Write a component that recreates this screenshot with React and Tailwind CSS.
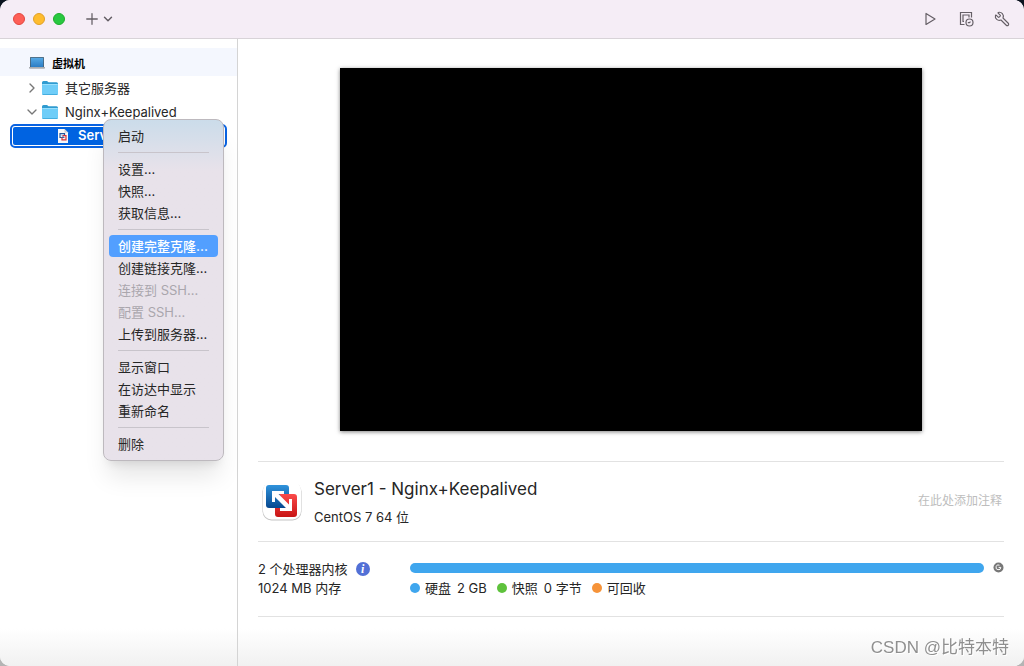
import React, { useState } from 'react';
import clsx from 'clsx';
import { ChevronDown, ChevronRight, Plus, Wrench } from 'lucide-react';

const menuGroups = [
  [{ label: '启动' }],
  [{ label: '设置...' }, { label: '快照...' }, { label: '获取信息...' }],
  [
    { label: '创建完整克隆...' },
    { label: '创建链接克隆...' },
    { label: '连接到 SSH...', disabled: true },
    { label: '配置 SSH...', disabled: true },
    { label: '上传到服务器...' },
  ],
  [{ label: '显示窗口' }, { label: '在访达中显示' }, { label: '重新命名' }],
  [{ label: '删除' }],
];

const legend = [
  { color: 'bg-[#3fa6ee]', name: '硬盘', value: '2 GB' },
  { color: 'bg-[#5ec23c]', name: '快照', value: '0 字节' },
  { color: 'bg-[#f69339]', name: '可回收' },
];

function FolderIcon() {
  return (
    <svg width="16" height="16" viewBox="0 0 16 16" className="shrink-0">
      <path d="M0 2.5Q0 1 1.5 1H5l1.5 1.3H14.5Q16 2.3 16 3.8V6H0z" fill="#2f9bd0" />
      <rect x="0" y="4" width="16" height="11" rx="1.2" fill="#6fcdf8" />
      <rect x="0.3" y="4" width="15.4" height="1" fill="#9be0fd" />
      <rect x="0.5" y="14" width="15" height="1" rx="0.5" fill="#45aee0" />
    </svg>
  );
}

function LaptopIcon() {
  return (
    <svg width="16" height="14" viewBox="0 0 16 14" className="shrink-0">
      <defs>
        <linearGradient id="laptop" x1="0" y1="0" x2="0" y2="1">
          <stop offset="0" stopColor="#56aae6" />
          <stop offset="1" stopColor="#2c7dc4" />
        </linearGradient>
      </defs>
      <rect x="1" y="0" width="14" height="10.5" rx="0.8" fill="#4a5a66" />
      <rect x="1.7" y="0.7" width="12.6" height="9.3" fill="url(#laptop)" />
      <path d="M0 10h16v1q0 .8-1 .8H1q-1 0-1-.8z" fill="#a9adb1" />
    </svg>
  );
}

function VmFileIcon() {
  return (
    <svg width="12" height="16" viewBox="0 0 12 16" className="shrink-0">
      <path d="M1 1h6.500L11 4.500V15H1z" fill="#f7f7f7" />
      <path d="M7.500 1v3.500H11z" fill="#c9ccd2" />
      <path d="M6.800 9.500H3V5.700h4.500v2" fill="none" stroke="#24579f" strokeWidth="1.200" />
      <path d="M5.500 7.700H9v4.100H5V9.500" fill="none" stroke="#d8313a" strokeWidth="1.200" />
      <path d="M5 7.500l2.500 2.500" stroke="#24579f" strokeWidth="0.800" />
    </svg>
  );
}

function FusionLogo() {
  return (
    <svg width="40" height="40" viewBox="0 0 40 40" className="shrink-0">
      <defs>
        <linearGradient id="blue" x1="0" y1="0" x2="0" y2="1">
          <stop offset="0" stopColor="#2f93dc" />
          <stop offset="1" stopColor="#07488f" />
        </linearGradient>
        <linearGradient id="red" x1="0" y1="0" x2="0" y2="1">
          <stop offset="0" stopColor="#fb4b4b" />
          <stop offset="1" stopColor="#c81414" />
        </linearGradient>
      </defs>
      <rect x="0.5" y="1.5" width="39" height="38" rx="9" fill="#c4c4c4" />
      <rect x="1" y="0.5" width="38" height="38" rx="8.5" fill="#fff" />
      <rect x="4" y="4" width="23" height="23" rx="3" fill="url(#blue)" />
      <path d="M17.5 13H32q3 0 3 3v17q0 3-3 3H16q-3 0-3-3v-6h11z" fill="url(#red)" />
      <path d="M10 10h12v3h-5.500L27 23.500V18h3v12H18v-3h6L13 16v5h-3z" fill="#fff" />
    </svg>
  );
}

function PlayIcon() {
  return (
    <svg width="16" height="16" viewBox="0 0 16 16" fill="none" stroke="currentColor" strokeWidth="1.2" strokeLinejoin="round">
      <path d="M4 2.5v11L13 8z" />
    </svg>
  );
}

function SnapshotIcon() {
  return (
    <svg width="16" height="16" viewBox="0 0 16 16" fill="none" stroke="currentColor" strokeWidth="1.2">
      <path d="M6.500 13.500H2.500V1.500h11v5" />
      <path d="M6 10.500H5V4h6v2.500" />
      <circle cx="11.500" cy="11.500" r="3.500" />
      <path d="M9.800 11.700h1.700l1-1" />
    </svg>
  );
}

function TitleBar() {
  return (
    <header className="flex h-[39px] shrink-0 items-center justify-between border-b border-[#d8d3d8] bg-[#f5edf6] pr-3.5 pl-[13px]">
      <div className="flex items-center gap-2">
        <button aria-label="关闭" className="size-3 rounded-full border border-[#e2463f] bg-[#fe5f57]" />
        <button aria-label="最小化" className="size-3 rounded-full border border-[#e0a028] bg-[#febc2e]" />
        <button aria-label="缩放" className="size-3 rounded-full border border-[#1dad2b] bg-[#28c840]" />
        <button aria-label="添加" className="ml-2.5 flex items-center text-[#655f66]">
          <Plus size={18} strokeWidth={1.7} />
          <ChevronDown size={14} strokeWidth={2.5} />
        </button>
      </div>
      <div className="flex items-center gap-5 text-[#655f66]">
        <button aria-label="启动">
          <PlayIcon />
        </button>
        <button aria-label="快照">
          <SnapshotIcon />
        </button>
        <button aria-label="设置">
          <Wrench size={16} strokeWidth={1.7} className="-scale-x-100" />
        </button>
      </div>
    </header>
  );
}

function ContextMenu() {
  const [active, setActive] = useState('创建完整克隆...');

  return (
    <div
      role="menu"
      className="absolute top-[-5px] left-[103px] z-10 w-[121px] rounded-lg border border-[#bdb9be] bg-linear-to-b from-[#cbdcea] to-[#e8e2ea] to-15% p-[5px] shadow-xl"
    >
      {menuGroups.map((group, i) => (
        <div key={i} role="group">
          {i > 0 && <hr className="mx-[9px] my-[5px] border-[#c8c4cb]" />}
          {group.map((item) => (
            <button
              key={item.label}
              role="menuitem"
              disabled={item.disabled}
              onMouseEnter={() => setActive(item.label)}
              className={clsx(
                'block h-[22px] w-full rounded px-[9px] pt-0.5 text-left whitespace-nowrap',
                item.disabled && 'text-[#aaa6ad]',
                active === item.label && 'bg-[#529fff] font-medium text-white'
              )}
            >
              {item.label}
            </button>
          ))}
        </div>
      ))}
    </div>
  );
}

function Sidebar() {
  return (
    <aside className="w-[238px] shrink-0 border-r border-[#d4d4d4] pt-[9px]">
      <h2 className="flex h-7 items-center gap-[7px] bg-[#f4f7fe] pt-1 pl-[29px] text-[11px] font-bold text-black">
        <LaptopIcon />
        虚拟机
      </h2>
      <ul>
        <li className="flex h-6 items-center gap-0.5 pl-6">
          <ChevronRight size={16} strokeWidth={2} className="text-[#777]" />
          <FolderIcon />
          <span className="pt-0.5 pl-[5px]">其它服务器</span>
        </li>
        <li className="flex h-6 items-center gap-0.5 pl-6">
          <ChevronDown size={16} strokeWidth={2} className="text-[#777]" />
          <FolderIcon />
          <span className="pt-0.5 pl-[5px]">Nginx+Keepalived</span>
        </li>
        <li className="relative px-2.5">
          <div className="h-6 rounded-[5px] border-2 border-[#0a63e1] bg-white p-px">
            <div className="flex h-full items-center gap-[9px] rounded-xs bg-[#0063e1] pl-11 font-semibold text-white">
              <VmFileIcon />
              Server1
            </div>
          </div>
          <ContextMenu />
        </li>
      </ul>
    </aside>
  );
}

function Details() {
  return (
    <main className="min-w-0 flex-1 px-5 pt-[29px]">
      <div className="mx-auto aspect-[582/363] w-[78%] bg-black shadow-[0_1px_4px_rgba(0,0,0,0.5)]" />

      <section className="mt-[30px] flex h-20 items-center justify-between border-t border-[#e2e2e2] pl-1">
        <div className="flex items-center gap-3">
          <FusionLogo />
          <div className="pt-0.5">
            <h1 className="text-[17px] leading-7">Server1 - Nginx+Keepalived</h1>
            <p className="mt-0.5 leading-6">CentOS 7 64 位</p>
          </div>
        </div>
        <input
          aria-label="注释"
          placeholder="在此处添加注释"
          className="w-40 pr-0.5 text-right text-xs outline-none placeholder:text-[#bdbdbd]"
        />
      </section>

      <section className="flex border-y border-[#e2e2e2] py-[18px]">
        <div className="w-38 shrink-0 leading-[19px]">
          <p className="flex items-center gap-2">
            2 个处理器内核
            <button
              aria-label="信息"
              className="size-3.5 rounded-full bg-[#5270d6] text-center font-['Liberation_Serif',serif] text-xs leading-3.5 font-bold text-white italic"
            >
              i
            </button>
          </p>
          <p>1024 MB 内存</p>
        </div>
        <div className="min-w-0 flex-1">
          <div className="flex h-4 items-center gap-[9px]">
            <div className="h-2.5 flex-1 rounded-full bg-[#3fa6ee]" />
            <button aria-label="刷新">
              <svg width="11" height="11" viewBox="0 0 11 11" className="block">
                <circle cx="5.500" cy="5.500" r="5" fill="#777" />
                <path d="M6.500 3.200A2.400 2.400 0 1 0 7.800 5.400H5.600" fill="none" stroke="#fff" />
              </svg>
            </button>
          </div>
          <ul className="mt-[3px] flex gap-2.5 leading-[19px]">
            {legend.map((item) => (
              <li key={item.name} className="flex items-center">
                <span className={clsx('mr-[5px] size-2.5 rounded-full', item.color)} />
                {item.name}
                {item.value && <span className="ml-1.5">{item.value}</span>}
              </li>
            ))}
          </ul>
        </div>
      </section>
    </main>
  );
}

export default function App() {
  return (
    <div className="min-h-screen bg-linear-to-b from-[#0b131f] from-50% to-[#b4b4b4] to-50% font-['Inter','Noto_Sans_CJK_SC',sans-serif] text-[13px] text-[#262626]">
      <div className="flex min-h-screen flex-col overflow-hidden rounded-[10px] bg-white">
        <TitleBar />
        <div className="flex flex-1 bg-linear-to-b from-white from-94% to-[#f1f1f1]">
          <Sidebar />
          <Details />
        </div>
        <p className="fixed right-[15px] bottom-1.5 font-['Liberation_Sans','Noto_Sans_CJK_SC',sans-serif] text-[17px] leading-6 text-[#8f8f8f] text-shadow-[1px_1px_0_#ffffff]">
          CSDN @比特本特
        </p>
      </div>
    </div>
  );
}
